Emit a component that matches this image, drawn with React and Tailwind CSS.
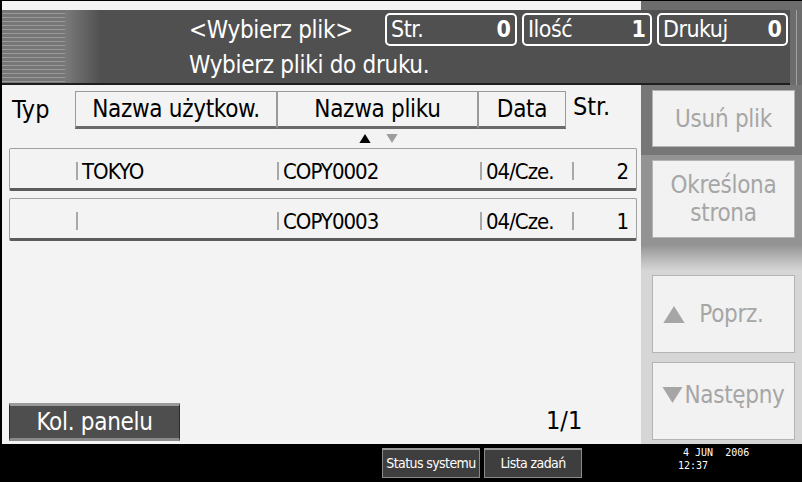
import React from 'react';

const FONT = { fontFamily: '"DejaVu Sans Condensed", "Liberation Sans Narrow", "Roboto Condensed", "DejaVu Sans", sans-serif' };

function Tri({ down, w, h, color }) {
  return (
    <svg width={w} height={h} viewBox="0 0 10 8" className="shrink-0">
      <polygon points={down ? '0,0 10,0 5,8' : '5,0 10,8 0,8'} fill={color} />
    </svg>
  );
}

function Counter({ label, value, width }) {
  return (
    <div className={`${width} h-[33px] border-2 border-white rounded-[5px] flex items-center justify-between px-[4px] text-[23px] leading-none`}>
      <span className="tracking-[-0.5px]">{label}</span>
      <span className="font-bold">{value}</span>
    </div>
  );
}

function HeadButton({ children, width }) {
  return (
    <div className={`${width} h-[38px] bg-[#f3f3f3] border border-[#9a9a9a] border-b-[3px] border-b-[#6a6a6a] flex items-center justify-center text-[24px] tracking-[-0.3px] text-black`}>
      {children}
    </div>
  );
}

function Sep() {
  return <span className="inline-block w-[2px] h-[18px] bg-[#a8a8a8] mr-[4px] shrink-0" />;
}

function FileRow({ user, name, date, pages }) {
  return (
    <div className="ml-[7px] w-[628px] h-[43px] bg-[#f3f3f3] border border-[#a0a0a0] border-b-[3px] border-b-[#5c5c5c] rounded-[2px] flex items-center pt-[5px] text-[22px] tracking-[-1px] text-black">
      <div className="w-[66px]" />
      <div className="w-[201px] flex items-center"><Sep />{user}</div>
      <div className="w-[203px] flex items-center"><Sep />{name}</div>
      <div className="w-[92px] flex items-center"><Sep />{date}</div>
      <div className="flex-1 flex items-center pr-[8px]"><Sep /><span className="ml-auto">{pages}</span></div>
    </div>
  );
}

function SideButton({ children, height }) {
  return (
    <div className={`w-[143px] ${height} bg-[#f2f2f2] border border-[#b4b4b4] flex flex-col items-center justify-center text-[24px] leading-[28px] tracking-[-0.3px] text-[#a6a6a6]`}>
      {children}
    </div>
  );
}

function BarButton({ children }) {
  return (
    <div className="w-[98px] h-[30px] bg-[#3e3e3e] border border-[#8a8a8a] border-t-2 border-t-[#9a9a9a] flex items-center justify-center text-white text-[14px] tracking-[-0.6px]">
      {children}
    </div>
  );
}

export default function App() {
  return (
    <div className="w-[802px] h-[482px] bg-black flex flex-col overflow-hidden" style={FONT}>
      <div className="h-[444px] flex flex-col pl-[2px] pt-[1px]">
        {/* strip above header */}
        <div className="h-[9px] flex">
          <div className="w-[639px] bg-[#f3f3f3]" />
          <div className="flex-1 bg-[#6c6c6c]" />
        </div>

        {/* Header */}
        <div className="h-[75px] flex">
          <div className="w-[788px] flex border-b-2 border-[#1e1e1e]">
            <div className="w-[63px] bg-[repeating-linear-gradient(to_bottom,#767676_0px,#767676_3px,#9a9a9a_3px,#9a9a9a_4px)]" />
            <div className="w-[36px] bg-[linear-gradient(to_right,#7a7a7a,#505050)]" />
            <div className="flex-1 bg-[#505050] text-white pl-[88px] pt-[3px]">
              <div className="flex items-center">
                <div className="w-[196px] text-[24px] leading-none tracking-[-0.3px]">&lt;Wybierz plik&gt;</div>
                <div className="flex gap-[5px]">
                  <Counter label="Str." value="0" width="w-[132px]" />
                  <Counter label="Ilość" value="1" width="w-[130px]" />
                  <Counter label="Drukuj" value="0" width="w-[131px]" />
                </div>
              </div>
              <div className="text-[24px] leading-none mt-[7px] tracking-[-0.3px]">Wybierz pliki do druku.</div>
            </div>
          </div>
          <div className="flex-1 bg-[#6c6c6c] flex justify-center">
            <div className="w-[1px] h-full bg-[#a0a0a0]" />
          </div>
        </div>

        {/* Body */}
        <div className="flex-1 flex">
          <div className="w-[639px] bg-[#f3f3f3] flex flex-col pt-[6px] pb-[3px]">
            <div className="flex items-center">
              <div className="w-[73px] pl-[10px] text-[25px] text-black">Typ</div>
              <HeadButton width="w-[202px]">Nazwa użytkow.</HeadButton>
              <HeadButton width="w-[201px]">Nazwa pliku</HeadButton>
              <HeadButton width="w-[88px]">Data</HeadButton>
              <div className="pl-[7px] text-[25px] text-black -mt-[6px]">Str.</div>
            </div>
            <div className="h-[19px] flex items-center pl-[356px] gap-[13px]">
              <Tri w={14} h={9} color="#000000" />
              <Tri down w={14} h={9} color="#9c9c9c" />
            </div>
            <div className="flex flex-col gap-[7px]">
              <FileRow user="TOKYO" name="COPY0002" date="04/Cze." pages="2" />
              <FileRow user="" name="COPY0003" date="04/Cze." pages="1" />
            </div>
            <div className="mt-auto flex items-end">
              <div className="ml-[7px] w-[171px] h-[38px] bg-[#4e4e4e] border border-[#2a2a2a] border-t-[3px] border-t-[#9a9a9a] border-b-[3px] border-b-[#8a8a8a] flex items-center justify-center text-white text-[24px] tracking-[-0.3px]">
                Kol. panelu
              </div>
              <div className="ml-[366px] mb-[8px] text-[25px] text-black leading-none">1/1</div>
            </div>
          </div>

          {/* Right panel */}
          <div className="flex-1 flex flex-col pl-[11px] pt-[5px] bg-[linear-gradient(to_bottom,#777777_0px,#777777_70px,#939393_70px,#939393_160px,#b4b4b4_172px,#d6d6d6_186px,#d6d6d6_100%)]">
            <SideButton height="h-[57px]">Usuń plik</SideButton>
            <div className="h-[13px]" />
            <SideButton height="h-[78px]">
              <span>Określona</span>
              <span>strona</span>
            </SideButton>
            <div className="h-[37px]" />
            <SideButton height="h-[78px]">
              <span className="flex items-center gap-[14px] pr-[20px]"><Tri w={22} h={17} color="#a6a6a6" />Poprz.</span>
            </SideButton>
            <div className="h-[9px]" />
            <SideButton height="h-[78px]">
              <span className="flex items-center gap-[1px] -mt-[12px]"><Tri down w={21} h={16} color="#a6a6a6" />Następny</span>
            </SideButton>
          </div>
        </div>
      </div>

      {/* Bottom bar */}
      <div className="flex-1 flex items-start pt-[4px] pl-[382px]">
        <div className="flex gap-[4px]">
          <BarButton>Status systemu</BarButton>
          <BarButton>Lista zadań</BarButton>
        </div>
        <div className="ml-[96px] -mt-[2px] text-white text-[10px] leading-[13px]" style={{ fontFamily: '"DejaVu Sans Mono", monospace' }}>
          <div className="pl-[5px] whitespace-pre">4 JUN  2006</div>
          <div>12:37</div>
        </div>
      </div>
    </div>
  );
}
